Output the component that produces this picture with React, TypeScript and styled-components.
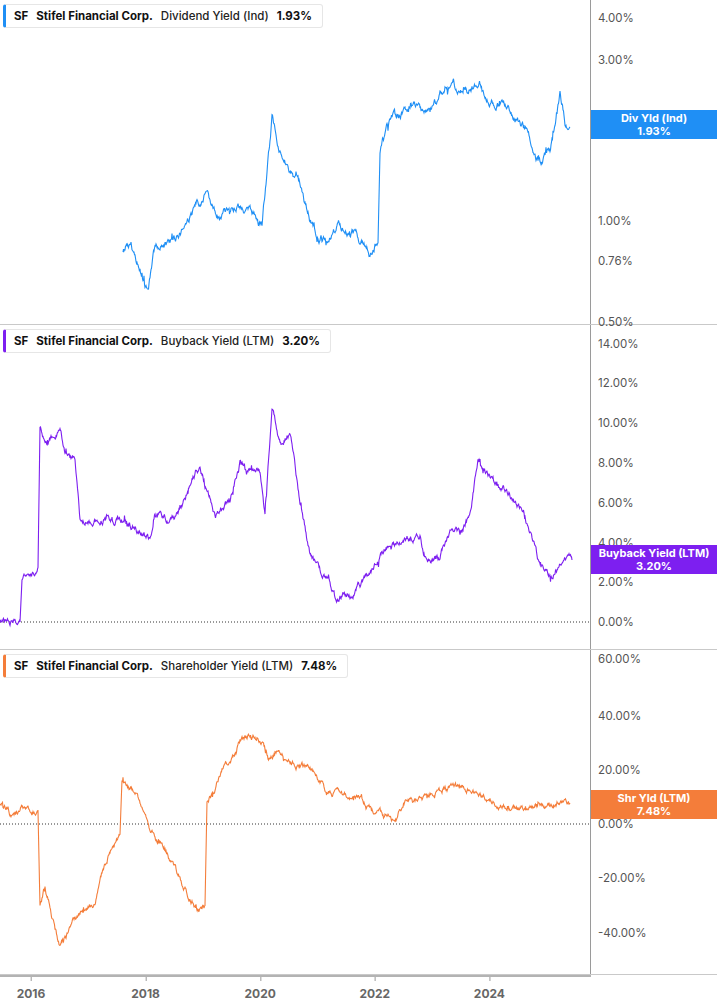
import React from 'react';
import styled, { createGlobalStyle } from 'styled-components';

const Global = createGlobalStyle`
  body { margin: 0; background: #fff; font-family: Inter, "Liberation Sans", sans-serif; }
`;

const PLOT_W = 591;
const PANEL_H = 325;

type Pt = [number, number];

interface PanelDef {
  color: string;
  metric: string;
  value: string;
  badge: string[];
  badgeTop: number;
  ticks: { label: string; y: number }[];
  zeroY?: number;
  pts: Pt[];
  noise: number;
}

const panels: PanelDef[] = [
  {
    color: '#1f8ff5',
    metric: 'Dividend Yield (Ind)',
    value: '1.93%',
    badge: ['Div Yld (Ind)', '1.93%'],
    badgeTop: 110,
    ticks: [
      { label: '4.00%', y: 18 }, { label: '3.00%', y: 60 }, { label: '2.00%', y: 120 },
      { label: '1.00%', y: 221 }, { label: '0.76%', y: 261 }, { label: '0.50%', y: 322 },
    ],
    noise: 9,
    pts: [[123,250],[130,245],[140,270],[148,295],[155,250],[175,240],[195,210],[205,195],[215,215],[240,205],[262,225],[272,120],[280,150],[300,185],[310,220],[320,240],[340,225],[360,240],[370,255],[378,240],[380,150],[390,120],[410,105],[430,115],[445,85],[465,90],[480,85],[490,100],[510,110],[525,130],[540,165],[550,150],[560,95],[565,125],[570,127]],
  },
  {
    color: '#7d1ff0',
    metric: 'Buyback Yield (LTM)',
    value: '3.20%',
    badge: ['Buyback Yield (LTM)', '3.20%'],
    badgeTop: 220,
    ticks: [
      { label: '14.00%', y: 19 }, { label: '12.00%', y: 58 }, { label: '10.00%', y: 98 },
      { label: '8.00%', y: 138 }, { label: '6.00%', y: 178 }, { label: '4.00%', y: 218 },
      { label: '2.00%', y: 257 }, { label: '0.00%', y: 297 },
    ],
    zeroY: 297,
    noise: 8,
    pts: [[0,297],[20,297],[22,255],[35,250],[38,240],[40,100],[45,120],[55,110],[60,105],[65,130],[75,135],[80,195],[100,195],[120,190],[130,200],[140,210],[150,215],[155,190],[175,195],[195,150],[200,140],[205,160],[215,190],[230,175],[240,140],[260,145],[265,190],[272,85],[280,120],[290,110],[295,140],[300,180],[310,230],[320,245],[330,260],[335,272],[350,270],[370,250],[380,230],[400,215],[420,210],[425,235],[440,232],[450,205],[460,210],[470,190],[478,135],[490,155],[510,170],[520,180],[530,205],[538,235],[550,250],[555,245],[565,230],[572,235]],
  },
  {
    color: '#f47d3a',
    metric: 'Shareholder Yield (LTM)',
    value: '7.48%',
    badge: ['Shr Yld (LTM)', '7.48%'],
    badgeTop: 140,
    ticks: [
      { label: '60.00%', y: 9 }, { label: '40.00%', y: 66 }, { label: '20.00%', y: 120 },
      { label: '0.00%', y: 174 }, { label: '-20.00%', y: 228 }, { label: '-40.00%', y: 283 },
    ],
    zeroY: 174,
    noise: 7,
    pts: [[0,155],[8,160],[10,165],[20,165],[22,160],[38,158],[40,255],[45,235],[55,280],[60,295],[70,280],[80,260],[95,255],[100,225],[110,200],[120,185],[122,130],[135,145],[145,165],[150,180],[165,200],[175,220],[185,240],[195,255],[200,260],[205,255],[207,150],[215,140],[222,118],[235,105],[240,90],[250,85],[262,95],[268,110],[275,100],[290,110],[310,120],[325,140],[345,145],[360,150],[380,160],[395,175],[405,150],[420,150],[435,145],[450,138],[470,140],[490,150],[505,155],[520,158],[535,155],[550,155],[560,150],[570,153]],
  },
];

function makeSeries(pts: Pt[], noise: number, seed: number): string {
  let s = seed;
  const rnd = () => { s = (s * 9301 + 49297) % 233280; return s / 233280; };
  const out: string[] = [];
  let walk = 0;
  for (let i = 0; i < pts.length - 1; i++) {
    const [x0, y0] = pts[i];
    const [x1, y1] = pts[i + 1];
    const steps = Math.max(1, Math.round((x1 - x0) * 2));
    const jump = Math.abs(y1 - y0) > 40 && x1 - x0 < 4;
    for (let k = 0; k < steps; k++) {
      const t = k / steps;
      if (!jump) walk = walk * 0.85 + (rnd() - 0.5) * noise * 0.6;
      const spike = !jump && rnd() > 0.93 ? (rnd() - 0.5) * noise : 0;
      out.push(`${(x0 + (x1 - x0) * t).toFixed(1)},${(y0 + (y1 - y0) * t + walk + spike).toFixed(1)}`);
    }
  }
  const last = pts[pts.length - 1];
  out.push(`${last[0]},${last[1]}`);
  return out.join(' ');
}

const Page = styled.div`
  width: 717px;
  height: 1005px;
  display: flex;
  flex-direction: column;
`;

const PanelRow = styled.div`
  display: flex;
  height: ${PANEL_H}px;
  border-bottom: 1px solid #c9c9c9;
  box-sizing: border-box;
`;

const Plot = styled.div`
  position: relative;
  width: ${PLOT_W}px;
  border-right: 1px solid #9a9a9a;
  box-sizing: border-box;
`;

const Axis = styled.div`
  position: relative;
  flex: 1;
`;

const TickLabel = styled.span`
  position: absolute;
  left: 7px;
  transform: translateY(-50%);
  font-size: 11.5px;
  color: #555;
`;

const Badge = styled.div<{ $bg: string }>`
  position: absolute;
  left: 0;
  right: 0;
  height: 29px;
  background: ${p => p.$bg};
  color: #fff;
  font-size: 11px;
  font-weight: 700;
  display: flex;
  flex-direction: column;
  align-items: center;
  justify-content: center;
  line-height: 13px;
`;

const Legend = styled.div<{ $c: string }>`
  position: absolute;
  top: 4px;
  left: 3px;
  height: 22px;
  display: flex;
  align-items: center;
  gap: 8px;
  padding: 0 10px 0 8px;
  background: #fff;
  border: 1px solid #e6e6e6;
  border-left: 3px solid ${p => p.$c};
  border-radius: 3px;
  font-size: 11.5px;
  color: #222;
  font-weight: 600;
  white-space: nowrap;
`;

const Strong = styled.span`
  font-weight: 700;
  color: #111;
`;

const Normal = styled.span`
  font-weight: 500;
`;

const XAxis = styled.div`
  position: relative;
  width: ${PLOT_W}px;
  height: 30px;
  border-top: 2px solid #b3b3b3;
  box-sizing: border-box;
`;

const Year = styled.span`
  position: absolute;
  top: 9px;
  transform: translateX(-50%);
  font-size: 12px;
  font-weight: 700;
  color: #666;
  &::before {
    content: '';
    position: absolute;
    left: 50%;
    top: -9px;
    height: 4px;
    border-left: 1px solid #999;
  }
`;

export default function App() {
  return (
    <Page>
      <Global />
      {panels.map((p, i) => (
        <PanelRow key={p.metric}>
          <Plot>
            <svg width={PLOT_W - 1} height={PANEL_H - 1} style={{ display: 'block' }}>
              {p.zeroY !== undefined && (
                <line x1={0} x2={PLOT_W} y1={p.zeroY} y2={p.zeroY} stroke="#333" strokeDasharray="1 2" />
              )}
              <polyline points={makeSeries(p.pts, p.noise, 17 + i * 31)} fill="none" stroke={p.color} strokeWidth={1.1} />
            </svg>
            <Legend $c={p.color}>
              <Strong>SF</Strong>
              <Strong>Stifel Financial Corp.</Strong>
              <Normal>{p.metric}</Normal>
              <Strong>{p.value}</Strong>
            </Legend>
          </Plot>
          <Axis>
            {p.ticks.map(t => (
              <TickLabel key={t.label} style={{ top: t.y }}>{t.label}</TickLabel>
            ))}
            <Badge $bg={p.color} style={{ top: p.badgeTop }}>
              <span>{p.badge[0]}</span>
              <span>{p.badge[1]}</span>
            </Badge>
          </Axis>
        </PanelRow>
      ))}
      <XAxis>
        {['2016', '2018', '2020', '2022', '2024'].map((y, k) => (
          <Year key={y} style={{ left: 31 + k * 114.6 }}>{y}</Year>
        ))}
      </XAxis>
    </Page>
  );
}
